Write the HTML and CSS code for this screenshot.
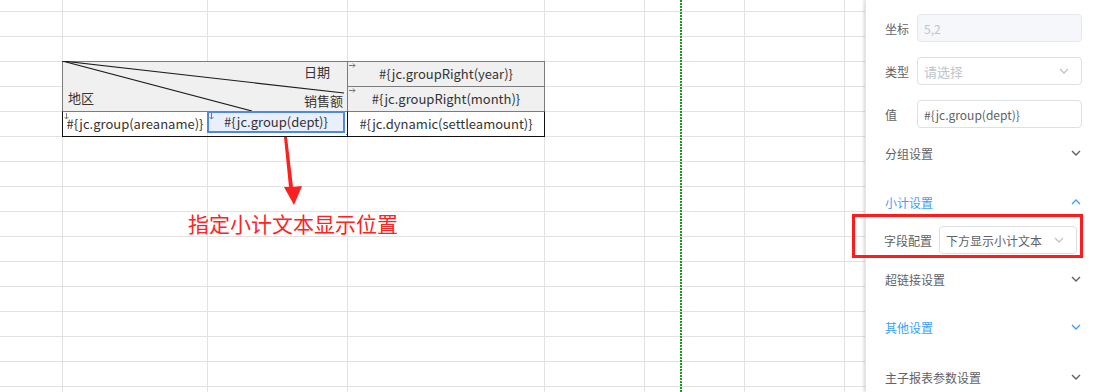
FILE: index.html
```html
<!DOCTYPE html>
<html lang="zh-CN">
<head>
<meta charset="utf-8">
<title>报表设计</title>
<link rel="stylesheet" href="styles.css">
</head>
<body>
<div class="app">
  <main class="sheet">
    <div class="cell head-diag">
      <svg class="diag" viewBox="0 0 285 50" width="285" height="50"><line x1="0" y1="0" x2="282" y2="32"/><line x1="0" y1="0" x2="190" y2="50"/></svg>
      <span class="t-date">日期</span>
      <span class="t-area">地区</span>
      <span class="t-sales">销售额</span>
    </div>
    <div class="cell head-right r1"><svg class="mark" viewBox="0 0 7 6" width="7" height="6"><path d="M0 2.5H6M4 0.5L6 2.5L4 4.5"/></svg>#{jc.groupRight(year)}</div>
    <div class="cell head-right r2"><svg class="mark" viewBox="0 0 7 6" width="7" height="6"><path d="M0 2.5H6M4 0.5L6 2.5L4 4.5"/></svg>#{jc.groupRight(month)}</div>
    <div class="cell data c-area"><svg class="mark" viewBox="0 0 6 7" width="6" height="7"><path d="M2.5 0V6M0.5 4L2.5 6L4.5 4"/></svg>#{jc.group(areaname)}</div>
    <div class="cell data c-dept">
      <div class="selection"><svg class="mark" viewBox="0 0 6 7" width="6" height="7"><path d="M2.5 0V6M0.5 4L2.5 6L4.5 4"/></svg>#{jc.group(dept)}</div>
      <span class="fill-handle"></span>
    </div>
    <div class="cell data c-amount">#{jc.dynamic(settleamount)}</div>
    <svg class="callout-arrow" viewBox="0 0 140 75" width="140" height="75"><polygon points="77,1 80,1 86,51 95,50 87,69 77,51 82,51"/></svg>
    <div class="callout-text">指定小计文本显示位置</div>
    <div class="page-break"></div>
  </main>
  <aside class="panel">
    <div class="form-row">
      <label class="lbl">坐标</label>
      <div class="input is-disabled">5,2</div>
    </div>
    <div class="form-row">
      <label class="lbl">类型</label>
      <div class="input select is-placeholder"><span>请选择</span><svg class="chev" viewBox="0 0 10 6" width="10" height="6"><path d="M1 1L5 5L9 1"/></svg></div>
    </div>
    <div class="form-row">
      <label class="lbl">值</label>
      <div class="input">#{jc.group(dept)}</div>
    </div>
    <div class="sec sec-first"><span>分组设置</span><svg class="chev" viewBox="0 0 10 6" width="10" height="6"><path d="M1 1L5 5L9 1"/></svg></div>
    <div class="sec sec-active"><span>小计设置</span><svg class="chev" viewBox="0 0 10 6" width="10" height="6"><path d="M1 5L5 1L9 5"/></svg></div>
    <div class="highlight">
      <label class="lbl lbl-wide">字段配置</label>
      <div class="input select"><span>下方显示小计文本</span><svg class="chev" viewBox="0 0 10 6" width="10" height="6"><path d="M1 1L5 5L9 1"/></svg></div>
    </div>
    <div class="sec sec-after-box"><span>超链接设置</span><svg class="chev" viewBox="0 0 10 6" width="10" height="6"><path d="M1 1L5 5L9 1"/></svg></div>
    <div class="sec sec-active"><span>其他设置</span><svg class="chev" viewBox="0 0 10 6" width="10" height="6"><path d="M1 1L5 5L9 1"/></svg></div>
    <div class="sec sec-last"><span>主子报表参数设置</span><svg class="chev" viewBox="0 0 10 6" width="10" height="6"><path d="M1 1L5 5L9 1"/></svg></div>
  </aside>
</div>
</body>
</html>
```
FILE: styles.css
```css
* { box-sizing: border-box; }
html, body { margin: 0; padding: 0; background: #fff; }
body {
  font-family: "Noto Sans CJK SC", "Noto Sans", sans-serif;
  width: 1108px;
  height: 392px;
  overflow: hidden;
}
.app {
  display: flex;
  height: 392px;
}

/* ---------- sheet ---------- */
.sheet {
  flex: 1;
  min-width: 0;
  display: grid;
  grid-template-columns: 62px 145px 140px 197px 100px 100px 100px 1fr;
  grid-template-rows: 11px repeat(16, 25px);
  overflow: hidden;
  background-image:
    linear-gradient(to right,
      transparent 62px, #e2e2e2 62px 63px,
      transparent 63px 207px, #e2e2e2 207px 208px,
      transparent 208px 347px, #e2e2e2 347px 348px,
      transparent 348px 544px, #e2e2e2 544px 545px,
      transparent 545px 644px, #e2e2e2 644px 645px,
      transparent 645px 744px, #e2e2e2 744px 745px,
      transparent 745px 844px, #e2e2e2 844px 845px,
      transparent 845px),
    linear-gradient(#e2e2e2 1px, transparent 1px);
  background-size: 100% 100%, 100% 25px;
  background-position: 0 0, 0 11px;
  background-repeat: no-repeat, repeat;
  color: #333;
  font-size: 13px;
}
.cell {
  position: relative;
  display: flex;
  align-items: center;
  justify-content: center;
  white-space: nowrap;
  line-height: 20px;
}
.head-diag {
  grid-column: 2 / 4;
  grid-row: 4 / 6;
  background: #f0f0f0;
  border-top: 1px solid #7c7c7c;
  border-left: 1px solid #7c7c7c;
  display: grid;
  grid-template-columns: 1fr auto;
  grid-template-rows: 20px 1fr;
  align-items: start;
  padding: 0 4px 0 5px;
}
.diag {
  position: absolute;
  left: -1px;
  top: -1px;
}
.diag line { stroke: #1c1c1c; stroke-width: 1.2; }
.t-date { grid-column: 2; grid-row: 1; }
.t-area { grid-column: 1; grid-row: 2; margin-top: 6px; }
.t-sales { grid-column: 2; grid-row: 2; margin-top: 9px; }

.head-right {
  grid-column: 4;
  background: #f0f0f0;
  border-top: 1px solid #7c7c7c;
  border-left: 1px solid #7c7c7c;
  border-right: 1px solid #7c7c7c;
  margin-right: -1px;
}
.r1 { grid-row: 4; }
.r2 { grid-row: 5; }

.mark {
  position: absolute;
  left: 1px;
  top: 1px;
}
.mark path { fill: none; stroke: #6a6a6a; stroke-width: 0.9; }

.data {
  grid-row: 6;
  border-top: 1px solid #7c7c7c;
  border-bottom: 1px solid #111;
  margin-bottom: -1px;
}
.c-area { grid-column: 2; border-left: 1px solid #111; }
.c-dept { grid-column: 3; align-items: flex-start; justify-content: flex-start; }
.c-amount {
  grid-column: 4;
  border-left: 1px solid #111;
  border-right: 1px solid #111;
  margin-right: -1px;
}
.selection {
  position: relative;
  width: 138px;
  height: 22px;
  border: 2px solid #4d88ea;
  background: #e9f0fc;
  display: flex;
  align-items: center;
  justify-content: center;
  margin-top: -1px;
}
.selection .mark { left: 0; top: 0; }
.fill-handle {
  position: absolute;
  left: 138px;
  top: 21px;
  width: 3px;
  height: 3px;
  background: #4d88ea;
  border: 1px solid #fff;
}

.callout-arrow {
  grid-column: 3;
  grid-row: 7 / 10;
}
.callout-arrow polygon { fill: #ff1f1f; }
.callout-text {
  grid-column: 2 / 6;
  grid-row: 10;
  padding-left: 126px;
  font-size: 21px;
  line-height: 25px;
  color: #ff2222;
  white-space: nowrap;
}
.page-break {
  grid-column: 6;
  grid-row: 1 / -1;
  margin-left: 36px;
  width: 2px;
  background: repeating-linear-gradient(to bottom, #1b9a22 0 2px, transparent 2px 3px);
}

/* ---------- panel ---------- */
.panel {
  width: 243px;
  flex: none;
  background: #fff;
  box-shadow: -1px 0 3px rgba(0, 0, 0, 0.18);
  border-left: 1px solid #e6e6e6;
  padding: 14px 26px 0 19px;
  font-size: 12px;
  color: #606266;
  position: relative;
}
.form-row {
  display: flex;
  align-items: center;
  height: 28px;
  margin-bottom: 15px;
}
.form-row:nth-child(3) { margin-bottom: 0; }
.lbl {
  width: 32px;
  flex: none;
  color: #606266;
}
.lbl-wide { width: 55px; }
.input {
  flex: 1;
  height: 28px;
  border: 1px solid #dcdfe6;
  border-radius: 4px;
  padding: 0 12px 0 6px;
  display: flex;
  align-items: center;
  justify-content: space-between;
  color: #606266;
  white-space: nowrap;
  font-size: 12px;
}
.is-disabled {
  background: #f5f7fa;
  border-color: #e4e7ed;
  color: #c0c4cc;
}
.is-placeholder { color: #c0c4cc; font-size: 13px; }
.chev path { fill: none; stroke: #c0c4cc; stroke-width: 1.4; }
.sec {
  display: flex;
  justify-content: space-between;
  align-items: center;
  height: 20px;
  margin-top: 28px;
  color: #5f6266;
  padding-right: 1px;
}
.sec .chev path { stroke: #5f6266; }
.sec-first { margin-top: 15px; }
.sec-after-box { margin-top: 11px; }
.sec-last { margin-top: 30px; }
.sec-active { color: #409eff; }
.sec-active .chev path { stroke: #409eff; }
.sec-first + .sec-active { margin-top: 29px; }
.highlight {
  display: flex;
  align-items: center;
  margin: 2px -1px 0 -33px;
  border: 3px solid #ff1c1c;
  padding: 9px 3px 1px 29px;
}
.highlight .input { height: 28px; }
```
